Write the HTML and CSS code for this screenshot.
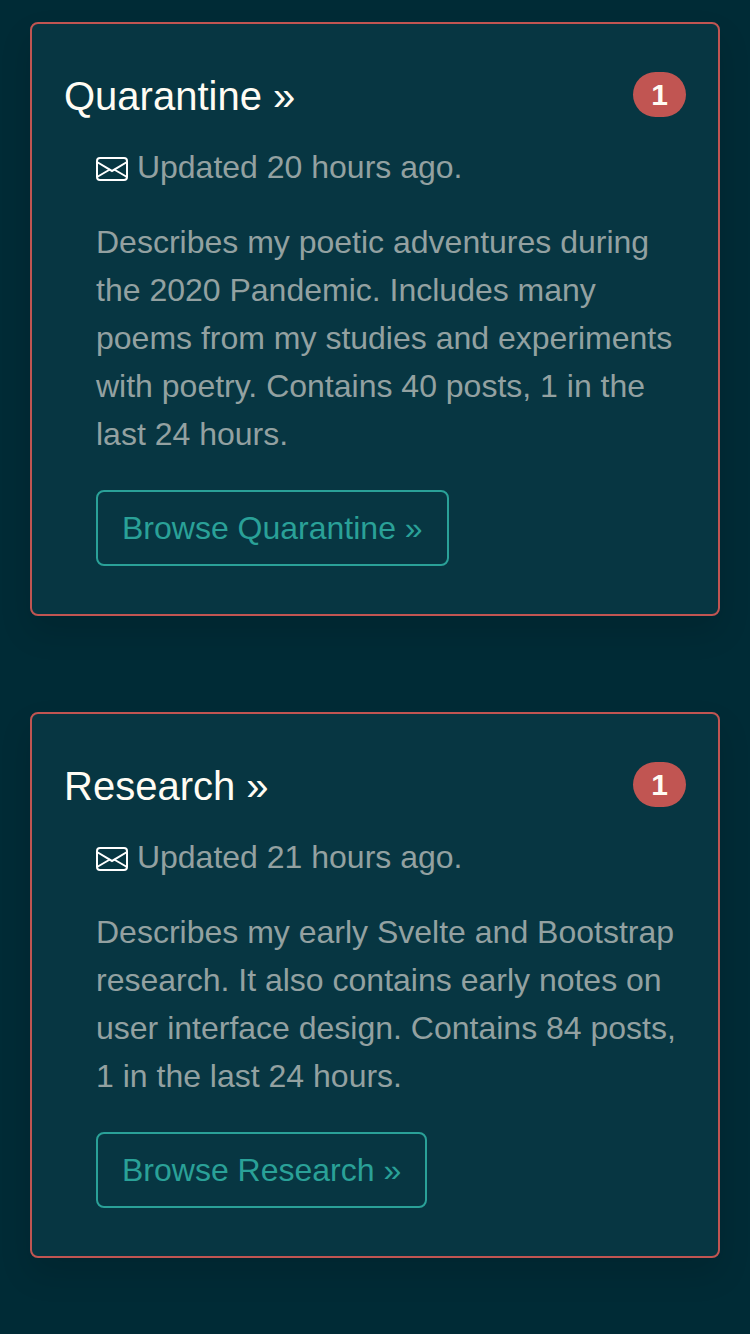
FILE: index.html
```html
<!DOCTYPE html>
<html lang="en">
<head>
<meta charset="utf-8">
<meta name="viewport" content="width=device-width, initial-scale=1">
<title>Blogs</title>
<link rel="stylesheet" href="styles.css">
</head>
<body>
<main class="blogs">
  <article class="card">
    <header class="card-header">
      <h2 class="card-title"><a href="#quarantine">Quarantine »</a></h2>
      <span class="badge">1</span>
    </header>
    <div class="card-body">
      <p class="updated"><svg class="icon" viewBox="0 0 16 16" aria-hidden="true"><path fill-rule="evenodd" d="M14 3H2a1 1 0 0 0-1 1v8a1 1 0 0 0 1 1h12a1 1 0 0 0 1-1V4a1 1 0 0 0-1-1zM2 2a2 2 0 0 0-2 2v8a2 2 0 0 0 2 2h12a2 2 0 0 0 2-2V4a2 2 0 0 0-2-2H2z"/><path d="M.071 4.243a.5.5 0 0 1 .686-.172L8 8.417l7.243-4.346a.5.5 0 0 1 .514.858L8 9.583.243 4.93a.5.5 0 0 1-.172-.686z"/><path d="M6.752 8.932l.432-.252-.504-.864-.432.252.504.864zm-6 3.5l6-3.5-.504-.864-6 3.5.504.864zm8.496-3.5l-.432-.252.504-.864.432.252-.504.864zm6 3.5l-6-3.5.504-.864 6 3.5-.504.864z"/></svg> Updated 20 hours ago.</p>
      <p class="description">Describes my poetic adventures during the 2020 Pandemic. Includes many poems from my studies and experiments with poetry. Contains 40 posts, 1 in the last 24 hours.</p>
      <a class="button" href="#quarantine">Browse Quarantine »</a>
    </div>
  </article>
  <article class="card">
    <header class="card-header">
      <h2 class="card-title"><a href="#research">Research »</a></h2>
      <span class="badge">1</span>
    </header>
    <div class="card-body">
      <p class="updated"><svg class="icon" viewBox="0 0 16 16" aria-hidden="true"><path fill-rule="evenodd" d="M14 3H2a1 1 0 0 0-1 1v8a1 1 0 0 0 1 1h12a1 1 0 0 0 1-1V4a1 1 0 0 0-1-1zM2 2a2 2 0 0 0-2 2v8a2 2 0 0 0 2 2h12a2 2 0 0 0 2-2V4a2 2 0 0 0-2-2H2z"/><path d="M.071 4.243a.5.5 0 0 1 .686-.172L8 8.417l7.243-4.346a.5.5 0 0 1 .514.858L8 9.583.243 4.93a.5.5 0 0 1-.172-.686z"/><path d="M6.752 8.932l.432-.252-.504-.864-.432.252.504.864zm-6 3.5l6-3.5-.504-.864-6 3.5.504.864zm8.496-3.5l-.432-.252.504-.864.432.252-.504.864zm6 3.5l-6-3.5.504-.864 6 3.5-.504.864z"/></svg> Updated 21 hours ago.</p>
      <p class="description">Describes my early Svelte and Bootstrap research. It also contains early notes on user interface design. Contains 84 posts, 1 in the last 24 hours.</p>
      <a class="button" href="#research">Browse Research »</a>
    </div>
  </article>
</main>
</body>
</html>
```
FILE: styles.css
```css
* { box-sizing: border-box; }
body {
  margin: 0;
  background: #002b36;
  color: #93a1a1;
  font: 32px/48px "Liberation Sans", Arial, sans-serif;
}
.blogs {
  display: flex;
  flex-direction: column;
  gap: 96px;
  padding: 22px 30px 76px;
}
.card {
  padding: 48px 32px;
  border: 2px solid #c15552;
  border-radius: 8px;
  background: #073642;
  box-shadow: 0 16px 32px rgba(0, 0, 0, .12);
}
.card-header {
  display: flex;
  align-items: flex-start;
  justify-content: space-between;
}
.card-title {
  margin: 0;
  font-size: 40px;
  line-height: 48px;
  font-weight: 400;
}
.card-title a {
  color: #fffcf4;
  text-decoration: none;
}
.badge {
  padding: 8px 18px;
  border-radius: 24px;
  background: #c15552;
  color: #fffcf4;
  font-size: 30px;
  line-height: 29px;
  font-weight: 700;
}
.card-body { padding: 23px 0 0 32px; }
.updated, .description { margin: 0 0 27px; }
.description { margin-bottom: 32px; }
.icon {
  width: 32px;
  height: 32px;
  vertical-align: -7px;
  fill: #fff;
}
.button {
  display: inline-block;
  padding: 12px 24px;
  border: 2px solid #2aa198;
  border-radius: 8px;
  color: #2aa198;
  text-decoration: none;
}
```
